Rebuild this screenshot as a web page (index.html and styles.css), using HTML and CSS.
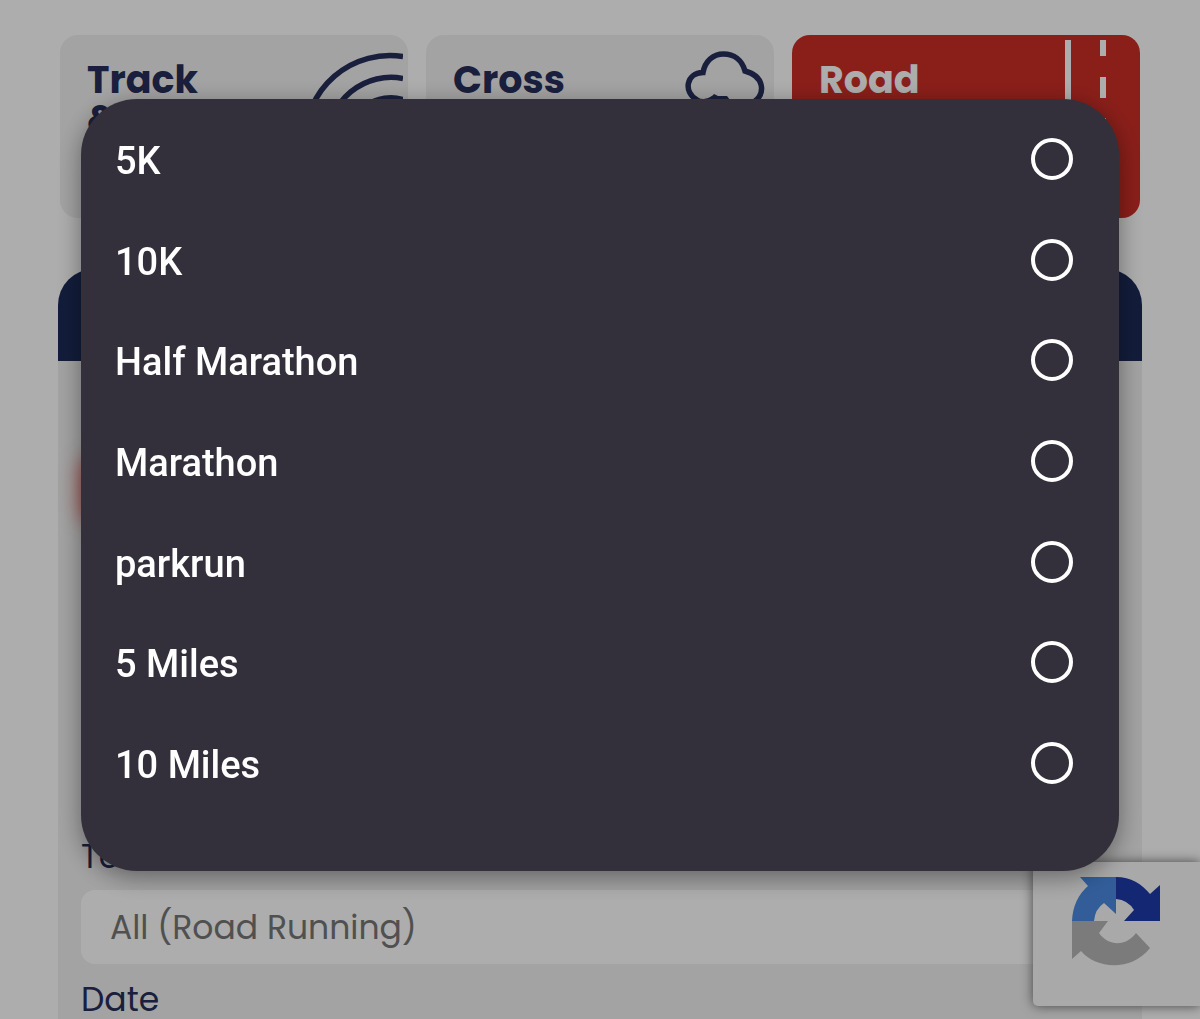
FILE: index.html
```
<!DOCTYPE html>
<html lang="en">

<head>
    <meta charset="utf-8">
    <meta name="viewport" content="width=device-width, initial-scale=1.0">
    <title>Road Running</title>
    <link rel="stylesheet" href="styles.css">
</head>

<body>
    <main class="page">
        <nav class="terrains">
            <a class="terrain" href="#track">
                <span>Track<br>&amp; Field</span>
                <svg class="icon" viewBox="0 0 100 178" aria-hidden="true">
                    <g fill="none" stroke="#262e5a" stroke-width="5.5">
                        <path d="M2 101A85 85 0 0 1 100 16.5" />
                        <path d="M25 101A63 63 0 0 1 100 38.5" />
                        <path d="M46 101A42 42 0 0 1 100 59.5" />
                    </g>
                </svg>
            </a>
            <a class="terrain" href="#cross">
                <span>Cross<br>Country</span>
                <svg class="icon" viewBox="0 0 100 178" aria-hidden="true">
                    <path d="M45 58C38 63 31 62 28 60C14 52 17 33 34 32.500C36 21 44 14 54.500 14C65 14 73 20 76 31C95 36 97 53 85 62" fill="none" stroke="#262e5a" stroke-width="5.500" />
                    <path d="M39 60L45 54L49 56H58L61 60V110H51V70Z" fill="#262e5a" />
                </svg>
            </a>
            <a class="terrain valgt" href="#road">
                <span>Road<br>Running</span>
                <svg class="icon" viewBox="0 0 100 178" aria-hidden="true">
                    <path d="M33 0V178" stroke="#fff" stroke-width="6" />
                    <path d="M68 0V16M68 37V58M68 78V99" stroke="#fff" stroke-width="6" />
                </svg>
            </a>
        </nav>

        <form class="search">
            <div class="search-top"></div>
            <div class="search-body">
                <div class="glow"></div>
                <label for="terrain">Terrain</label>
                <select id="terrain">
                    <option>All (Road Running)</option>
                </select>
                <label for="date">Date</label>
                <input id="date" type="text">
            </div>
        </form>
    </main>

    <div class="recaptcha">
        <svg viewBox="0 0 90 90" role="img" aria-label="reCAPTCHA">
            <path d="M45 0C60 0 71 7 79 17L89 8V44H53L63 33Q57 23 45 22Z" fill="#1c3aa9" />
            <path d="M45 0H9L17 9Q2 22 1 44H23Q24 32 33 26L45 37Z" fill="#4a8ae2" />
            <path d="M1 44H37L28 56C38 70 56 69 65 56L79 71C60 95 25 92 10 74L1 82Z" fill="#b6b6b6" />
        </svg>
    </div>

    <div class="popup">
        <div class="options" role="dialog" aria-label="Distance">
            <label class="option"><span>5K</span><input type="radio" name="distance"></label>
            <label class="option"><span>10K</span><input type="radio" name="distance"></label>
            <label class="option"><span>Half Marathon</span><input type="radio" name="distance"></label>
            <label class="option"><span>Marathon</span><input type="radio" name="distance"></label>
            <label class="option"><span>parkrun</span><input type="radio" name="distance"></label>
            <label class="option"><span>5 Miles</span><input type="radio" name="distance"></label>
            <label class="option"><span>10 Miles</span><input type="radio" name="distance"></label>
        </div>
    </div>
</body>

</html>
```
FILE: styles.css
```
* {
    box-sizing: border-box;
}

body {
    margin: 0;
    height: 100vh;
    overflow: hidden;
    background-color: white;
    color: #262e5a;
    font-family: Poppins, Inter, sans-serif;
}

.page {
    padding: 35px 58px 0;
}

.terrains {
    display: grid;
    grid-template-columns: repeat(3, 1fr);
    gap: 18px;
    padding: 0 2px;
}

.terrain {
    display: flex;
    justify-content: space-between;
    height: 183px;
    padding: 5px 5px 0 27px;
    border-radius: 18px;
    background-color: #f0f0f0;
    color: #262e5a;
    font-size: 38px;
    font-weight: 700;
    line-height: 39px;
    text-decoration: none;
}

.terrain span {
    padding-top: 20px;
}

.icon {
    width: 100px;
    height: 178px;
}

.valgt {
    background-color: #cc2e26;
    color: white;
}

.search {
    margin-top: 51px;
}

.search-top {
    height: 92px;
    border-radius: 36px 36px 0 0;
    background-color: #1c2b57;
}

.search-body {
    display: flex;
    flex-direction: column;
    padding: 96px 23px 40px;
    background-color: #f0f0f0;
}

/* required field */
.glow {
    width: 50%;
    height: 66px;
    margin-bottom: 315px;
    border-radius: 14px;
    box-shadow: 0 0 20px rgba(224, 52, 44, 0.8);
}

.search label {
    font-size: 33px;
    line-height: 38px;
    padding-bottom: 14px;
}

.search select,
.search input {
    appearance: none;
    height: 74px;
    padding: 0 29px;
    margin-bottom: 17px;
    border: none;
    border-radius: 14px;
    background-color: white;
    color: #777;
    font-family: inherit;
    font-size: 33px;
}

.recaptcha {
    position: fixed;
    right: 0;
    bottom: 13px;
    width: 167px;
    padding: 15px 38px 39px;
    border-radius: 5px 0 0 5px;
    background-color: #f9f9f9;
    box-shadow: 0 0 12px #666;
}

.recaptcha svg {
    display: block;
    width: 90px;
    height: 90px;
}

.popup {
    position: fixed;
    inset: 0;
    padding: 99px 81px;
    background-color: rgba(0, 0, 0, 0.32);
}

.options {
    display: grid;
    grid-auto-rows: 1fr;
    min-height: 772px;
    padding: 10px 46px 58px 34px;
    border-radius: 56px;
    background-color: #33303b;
    box-shadow: 0 6px 24px rgba(0, 0, 0, 0.4);
}

.option {
    display: flex;
    justify-content: space-between;
    align-items: center;
    color: white;
    font-family: Roboto, sans-serif;
    font-size: 38px;
    font-weight: 500;
}

.option span {
    padding-top: 4px;
}

.option input {
    appearance: none;
    width: 42px;
    height: 42px;
    margin: 0;
    border: 4px solid white;
    border-radius: 50%;
}

.option input:checked {
    background: radial-gradient(white 40%, transparent 45%);
}
```
